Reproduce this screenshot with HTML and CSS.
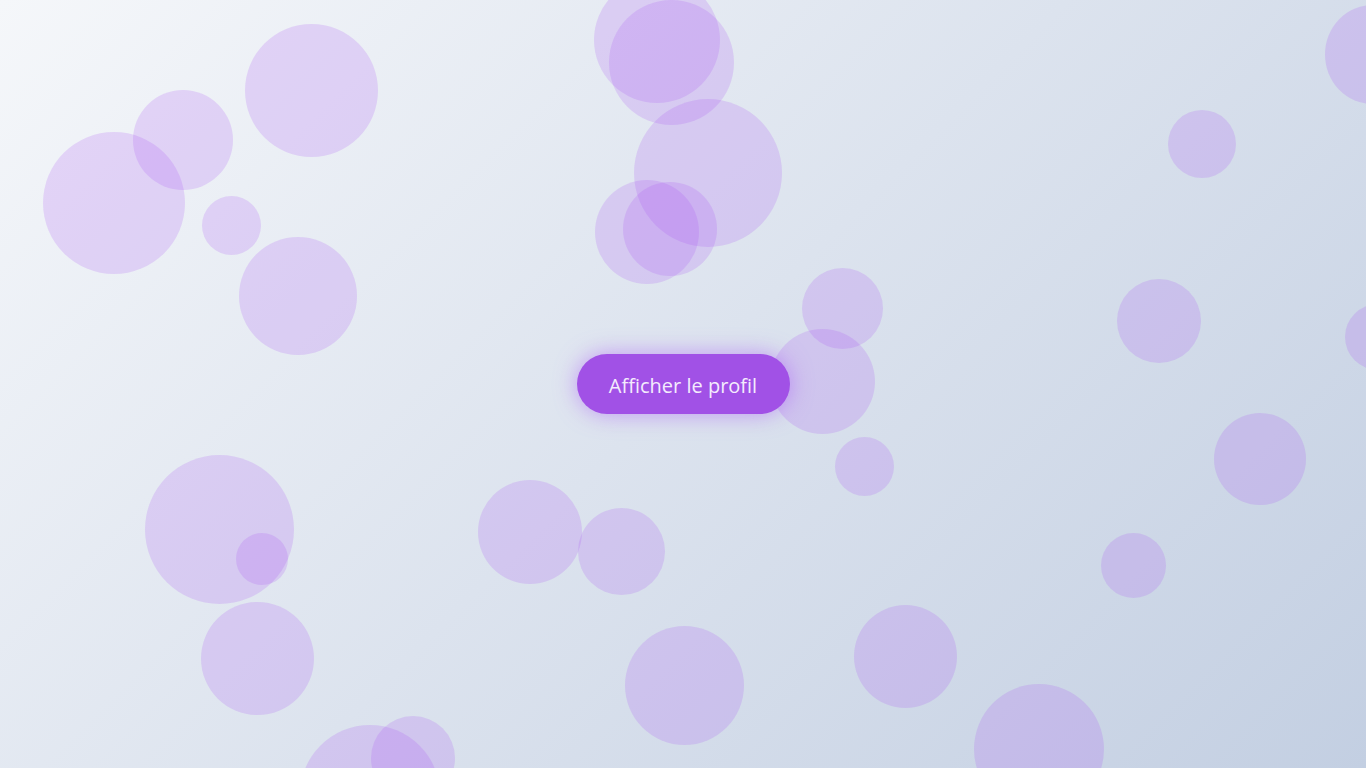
FILE: index.html
```html
<!DOCTYPE html>
<html lang="fr">
<head>
<meta charset="utf-8">
<title>Afficher le profil</title>
<link rel="stylesheet" href="styles.css">
</head>
<body>
<div class="bubbles">
  <span class="b" style="left:43px;top:132px;width:142px;height:142px"></span>
  <span class="b" style="left:133px;top:90px;width:100px;height:100px"></span>
  <span class="b" style="left:245px;top:24px;width:133px;height:133px"></span>
  <span class="b" style="left:202px;top:196px;width:59px;height:59px"></span>
  <span class="b" style="left:239px;top:237px;width:118px;height:118px"></span>
  <span class="b" style="left:594px;top:-23px;width:126px;height:126px"></span>
  <span class="b" style="left:609px;top:0px;width:125px;height:125px"></span>
  <span class="b" style="left:634px;top:99px;width:148px;height:148px"></span>
  <span class="b" style="left:595px;top:180px;width:104px;height:104px"></span>
  <span class="b" style="left:623px;top:182px;width:94px;height:94px"></span>
  <span class="b" style="left:802px;top:268px;width:81px;height:81px"></span>
  <span class="b" style="left:770px;top:329px;width:105px;height:105px"></span>
  <span class="b" style="left:835px;top:437px;width:59px;height:59px"></span>
  <span class="b" style="left:1168px;top:110px;width:68px;height:68px"></span>
  <span class="b" style="left:1325px;top:5px;width:95px;height:99px"></span>
  <span class="b" style="left:1117px;top:279px;width:84px;height:84px"></span>
  <span class="b" style="left:1345px;top:304px;width:66px;height:66px"></span>
  <span class="b" style="left:1214px;top:413px;width:92px;height:92px"></span>
  <span class="b" style="left:1101px;top:533px;width:65px;height:65px"></span>
  <span class="b" style="left:854px;top:605px;width:103px;height:103px"></span>
  <span class="b" style="left:974px;top:684px;width:130px;height:130px"></span>
  <span class="b" style="left:625px;top:626px;width:119px;height:119px"></span>
  <span class="b" style="left:478px;top:480px;width:104px;height:104px"></span>
  <span class="b" style="left:578px;top:508px;width:87px;height:87px"></span>
  <span class="b" style="left:145px;top:455px;width:149px;height:149px"></span>
  <span class="b" style="left:236px;top:533px;width:52px;height:52px"></span>
  <span class="b" style="left:201px;top:602px;width:113px;height:113px"></span>
  <span class="b" style="left:300px;top:725px;width:140px;height:140px"></span>
  <span class="b" style="left:371px;top:716px;width:84px;height:84px"></span>
</div>
<main class="stage">
  <button class="profile-btn" type="button">Afficher le profil</button>
</main>
</body>
</html>
```
FILE: styles.css
```css
html, body {
  margin: 0;
  padding: 0;
  height: 100%;
  overflow: hidden;
}
body {
  width: 100vw;
  height: 100vh;
  background: linear-gradient(135deg, #f5f7fa 0%, #c3cfe2 100%);
  font-family: "Open Sans", "Noto Sans", sans-serif;
  position: relative;
}
.bubbles {
  position: absolute;
  inset: 0;
  overflow: hidden;
  pointer-events: none;
}
.b {
  position: absolute;
  border-radius: 50%;
  background: rgba(168, 85, 247, 0.2);
}
.stage {
  position: relative;
  height: 100%;
  display: flex;
  align-items: center;
  justify-content: center;
}
.profile-btn {
  width: 213px;
  height: 60px;
  padding: 3px 0 0;
  border: none;
  border-radius: 30px;
  background: #a151e6;
  color: #f4ecfd;
  font-family: "Open Sans", "Noto Sans", sans-serif;
  font-size: 20px;
  box-shadow: 0 0 22px rgba(168, 85, 247, 0.55);
  cursor: pointer;
}
```
